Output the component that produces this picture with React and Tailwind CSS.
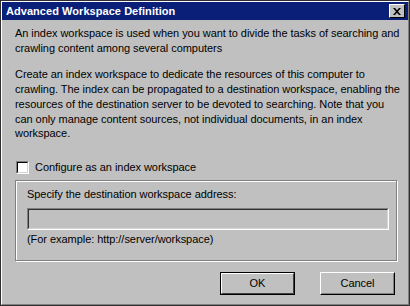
export default function App() {
  const font = { fontFamily: '"Liberation Sans", Arial, sans-serif' };
  return (
    <div className="w-[410px] h-[306px] bg-white overflow-hidden" style={font}>
      <div className="w-[410px] h-[306px] border border-[#303030] bg-[#c0c0c0]">
        <div className="h-full border border-t-white border-l-white border-r-[#808080] border-b-[#808080] flex flex-col">
          <div className="h-[18px] bg-[#0a1f78] flex items-center justify-between pl-[4px] pr-[3px]">
            <span className="text-white font-bold text-[11px] leading-none tracking-[0.05px]">Advanced Workspace Definition</span>
            <div className="w-[16px] h-[14px] bg-[#c0c0c0] border border-t-white border-l-white border-r-black border-b-black flex items-center justify-center">
              <svg width="8" height="7" viewBox="0 0 8 7">
                <path d="M0 0h2l2 2.2L6 0h2L5 3.5 8 7H6L4 4.8 2 7H0l3-3.5z" fill="#000" />
              </svg>
            </div>
          </div>
          <div className="px-[13px] text-[11px] leading-[14.7px] tracking-[-0.05px] text-black whitespace-nowrap">
            <p className="mt-[6px]">
              An index workspace is used when you want to divide the tasks of searching and<br />
              crawling content among several computers
            </p>
            <p className="mt-[12px]">
              Create an index workspace to dedicate the resources of this computer to<br />
              crawling. The index can be propagated to a destination workspace, enabling the<br />
              resources of the destination server to be devoted to searching. Note that you<br />
              can only manage content sources, not individual documents, in an index<br />
              workspace.
            </p>
            <div className="mt-[19px] flex items-center gap-[6px] ml-[1px]">
              <div className="w-[13px] h-[13px] bg-white border border-t-[#808080] border-l-[#808080] border-r-white border-b-white">
                <div className="w-full h-full border border-t-black border-l-black border-r-[#d4d4d4] border-b-[#d4d4d4]" />
              </div>
              <span>Configure as an index workspace</span>
            </div>
            <div className="mt-[5px] w-[382px] h-[81px] border border-[#808080] shadow-[inset_1px_1px_0_#fff,1px_1px_0_#fff] px-[11px] pt-[6px]">
              <div>Specify the destination workspace address:</div>
              <div className="mt-[7px] w-[362px] h-[22px] border border-t-[#808080] border-l-[#808080] border-r-white border-b-white">
                <div className="w-full h-full border border-t-[#303030] border-l-[#303030] border-r-[#d4d4d4] border-b-[#d4d4d4]" />
              </div>
              <div className="mt-[2px]">(For example: http://server/workspace)</div>
            </div>
            <div className="mt-[11px] flex justify-end gap-[25px] pr-[0px]">
              <div className="w-[75px] h-[23px] border border-black">
                <div className="w-full h-full border border-t-white border-l-white border-r-[#404040] border-b-[#404040] flex items-center justify-center">
                  <span>OK</span>
                </div>
              </div>
              <div className="w-[75px] h-[23px] border border-t-white border-l-white border-r-black border-b-black">
                <div className="w-full h-full border border-t-[#c0c0c0] border-l-[#c0c0c0] border-r-[#808080] border-b-[#808080] flex items-center justify-center">
                  <span>Cancel</span>
                </div>
              </div>
            </div>
          </div>
        </div>
      </div>
    </div>
  );
}
